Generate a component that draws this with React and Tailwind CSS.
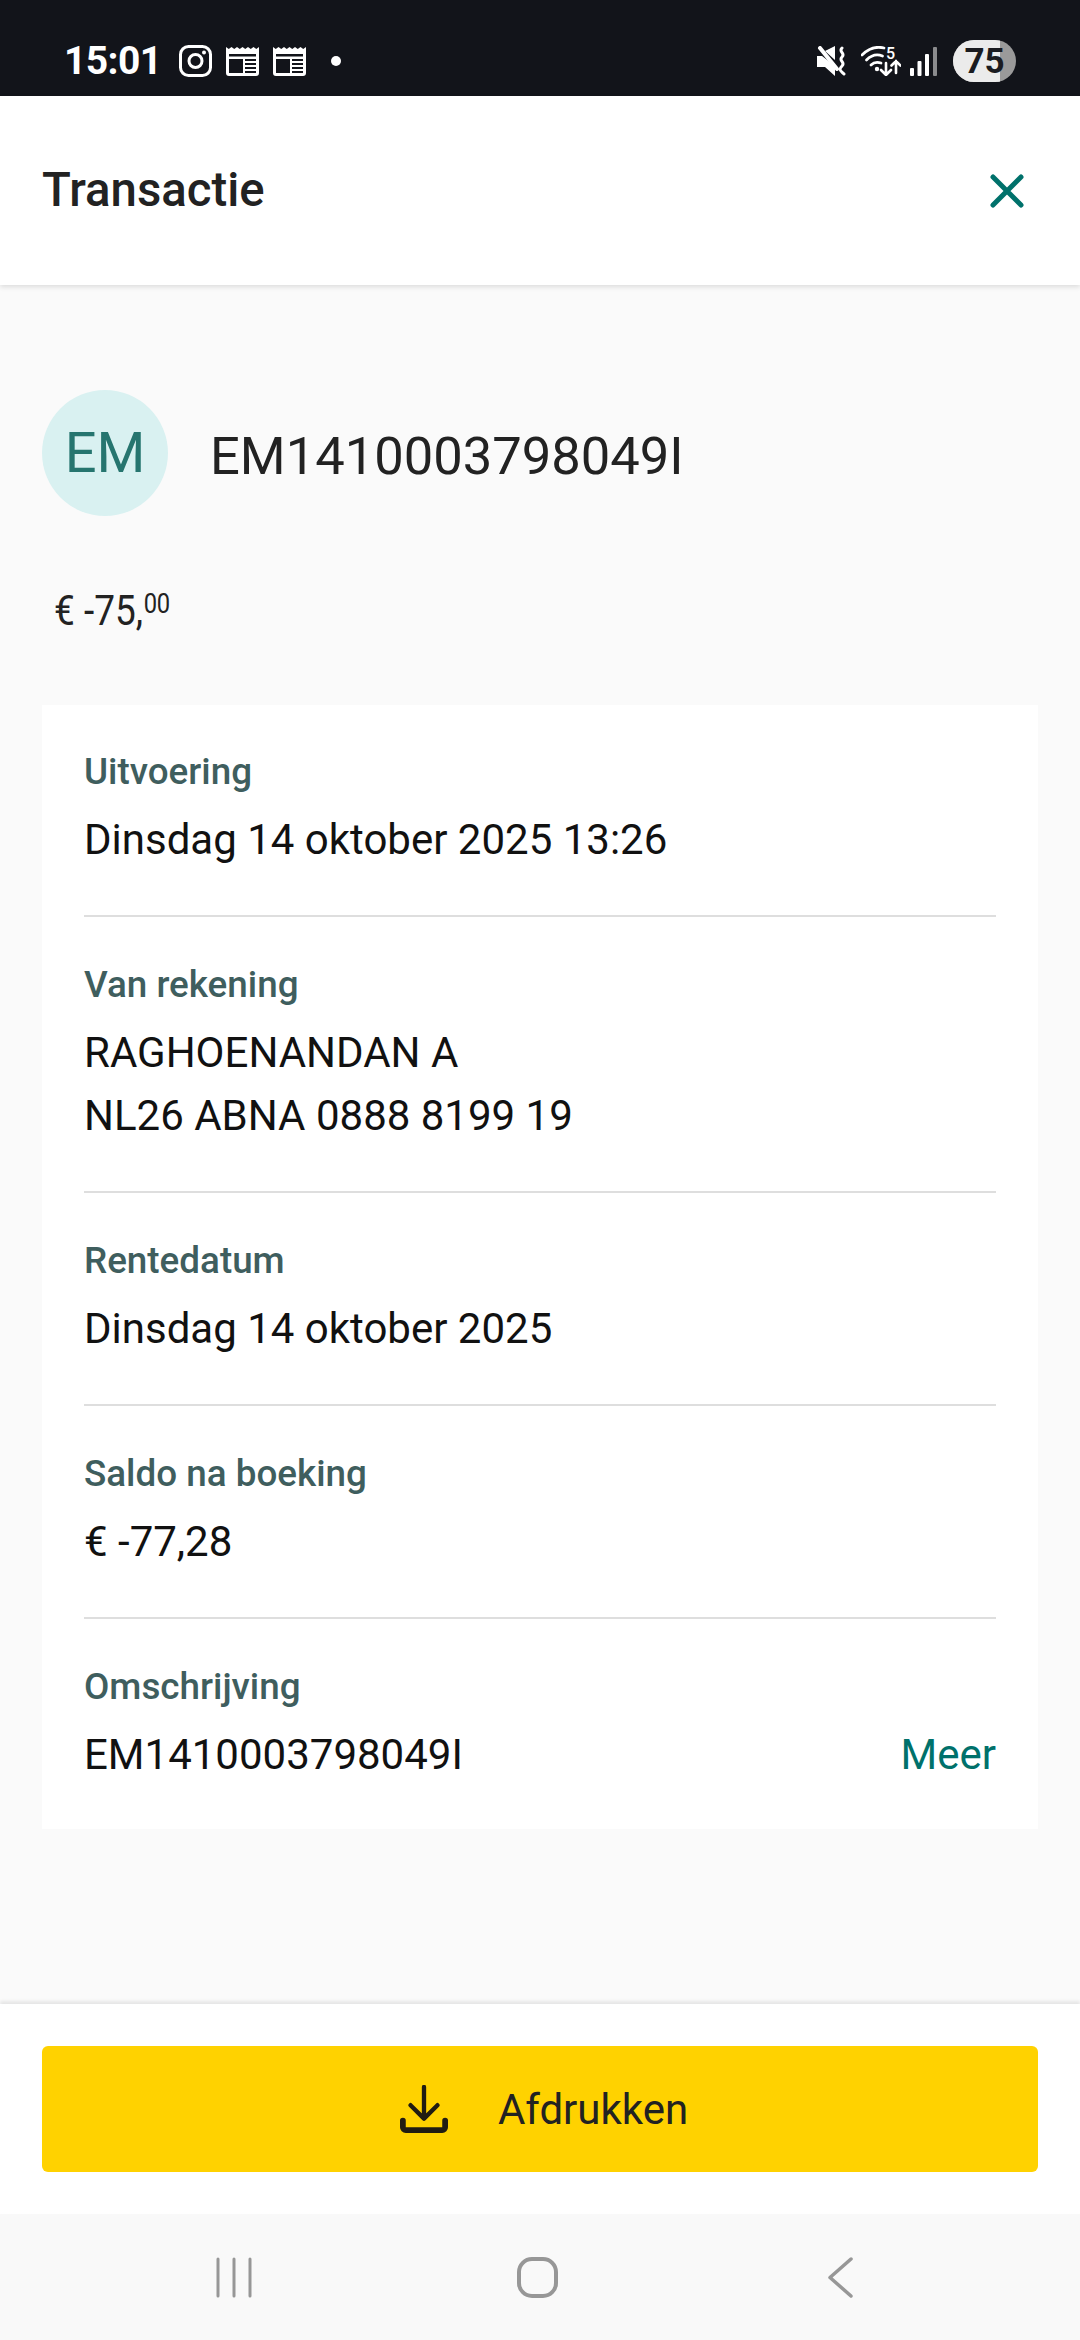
const font = { fontFamily: "Roboto, sans-serif" };

function Insta() {
  return (
    <svg width="33" height="32" viewBox="0 0 33 32" fill="none" stroke="#fff" strokeWidth="3">
      <rect x="1.5" y="1.5" width="30" height="29" rx="8" />
      <circle cx="16.5" cy="16" r="6.5" />
      <circle cx="25" cy="7.5" r="2" fill="#fff" stroke="none" />
    </svg>
  );
}

function Paper() {
  return (
    <svg width="33" height="30" viewBox="0 0 33 30">
      <path d="M0 1l2.75 2 2.75-2 2.75 2 2.75-2 2.75 2 2.75-2 2.75 2 2.75-2 2.75 2 2.75-2 2.75 2 2.75-2V27a3 3 0 0 1-3 3H3a3 3 0 0 1-3-3z" fill="#fff" />
      <rect x="3" y="8" width="27" height="2.5" fill="#12141a" />
      <rect x="3" y="13" width="14" height="14" fill="#12141a" />
      <rect x="19" y="13" width="11" height="2" fill="#12141a" />
      <rect x="19" y="17" width="11" height="2" fill="#12141a" />
      <rect x="19" y="21" width="11" height="2" fill="#12141a" />
      <rect x="19" y="25" width="11" height="2" fill="#12141a" />
    </svg>
  );
}

function Mute() {
  return (
    <svg width="29" height="30" viewBox="0 0 29 30" fill="none">
      <path d="M0 10h5L18 20v10L8 21H0z M8 5l10-5v14z" fill="#fff" />
      <path d="M3 2l17 21" stroke="#fff" strokeWidth="4" strokeLinecap="round" />
      <path d="M25 2c-4 4 4 5 0 9s4 5 0 9-1 5 2 8" stroke="#fff" strokeWidth="3" strokeLinecap="round" />
    </svg>
  );
}

function Wifi() {
  return (
    <svg width="40" height="30" viewBox="0 0 40 30" fill="none" stroke="#fff" strokeLinecap="round">
      <path d="M1 9C7 3 15 0 23 2" strokeWidth="2.8" />
      <path d="M5.5 14c5-5 11-6 16-4" strokeWidth="2.8" />
      <path d="M10 19c3-3 7-3 10-2" strokeWidth="2.8" />
      <circle cx="16" cy="23" r="2.2" fill="#fff" stroke="none" />
      <path d="M25 17v12m-5-5l5 5 5-5" strokeWidth="2.6" />
      <path d="M35 27V15m-4.5 4.5L35 15l4.500 4.500" strokeWidth="2.6" />
    </svg>
  );
}

function Signal() {
  return (
    <svg width="27" height="29" viewBox="0 0 27 29">
      <rect x="0" y="21" width="4" height="8" rx="1" fill="#fff" />
      <rect x="7.500" y="14" width="4" height="15" rx="1" fill="#fff" />
      <rect x="15" y="7" width="4" height="22" rx="1" fill="#fff" />
      <rect x="23" y="0" width="4" height="29" rx="1" fill="#8a8b8d" />
    </svg>
  );
}

function Battery() {
  return (
    <div className="relative w-[63px] h-[42px] rounded-full overflow-hidden bg-[#9a9a9a] flex items-center justify-center">
      <div className="absolute left-0 top-0 bottom-0 w-[47px] bg-[#ebebeb]" />
      <span className="relative text-[#1a1b20] text-[35px] font-bold leading-none">75</span>
    </div>
  );
}

function Row({ label, children, first, last, right }) {
  const pad = first ? "pt-[47px] pb-[44px]" : last ? "pt-[48px] pb-[43px]" : "pt-[48px] pb-[44px]";
  return (
    <div className={last ? pad : pad + " border-b-2 border-[#dedede]"}>
      <div className="text-[36.800px] leading-[40px] font-medium text-[#3f5e5e]">{label}</div>
      <div className="mt-[16px] flex justify-between items-center">
        <div className="text-[42px] leading-[63px] text-[#111]">{children}</div>
        {right}
      </div>
    </div>
  );
}

export default function App() {
  return (
    <div style={font} className="w-[1080px] h-[2340px] bg-[#fafafa] flex flex-col overflow-hidden">
      <div className="h-[96px] bg-[#12141a] flex items-center justify-between pl-[64px] pr-[64px] pt-[26px] shrink-0">
        <div className="flex items-center">
          <span className="text-white text-[39px] font-bold leading-none w-[115px] tracking-[-0.6px]">15:01</span>
          <div className="flex items-center gap-[14px]">
            <Insta />
            <Paper />
            <Paper />
          </div>
          <div className="w-[10px] h-[10px] rounded-full bg-white ml-[25px]" />
        </div>
        <div className="flex items-center">
          <Mute />
          <div className="relative ml-[15px]">
            <Wifi />
            <span className="absolute left-[25px] top-[0px] text-white text-[16px] font-medium leading-none">5</span>
          </div>
          <div className="ml-[9px]"><Signal /></div>
          <div className="ml-[16px]"><Battery /></div>
        </div>
      </div>

      <div className="h-[189px] bg-white flex items-center justify-between pl-[42px] pr-[56px] shadow-[0_2px_5px_rgba(0,0,0,0.12)] relative shrink-0">
        <div className="text-[47.300px] font-medium text-[#222]">Transactie</div>
        <svg width="34" height="34" viewBox="0 0 34 34" fill="none" stroke="#00716b" strokeWidth="5" strokeLinecap="round">
          <path d="M3 3l28 28M31 3L3 31" />
        </svg>
      </div>

      <div className="flex-1 px-[42px] pt-[105px]">
        <div className="flex items-center">
          <div className="w-[126px] h-[126px] rounded-full bg-[#d9f1f1] flex items-center justify-center text-[56px] text-[#26756f] shrink-0">EM</div>
          <div className="ml-[42px] mt-[6px] text-[52.500px] text-[#222]">EM1410003798049I</div>
        </div>
        <div className="mt-[70px] ml-[12px] h-[50px] flex items-start origin-left scale-x-[0.88] text-[#222]">
          <span className="text-[42px] leading-[50px]">€ -75,</span>
          <span className="text-[27px] leading-[36px] tracking-[-0.5px] ml-[1px]">00</span>
        </div>
        <div className="mt-[69px] bg-white px-[42px]">
          <Row first label="Uitvoering">Dinsdag 14 oktober 2025 13:26</Row>
          <Row label="Van rekening">RAGHOENANDAN A<br />NL26 ABNA 0888 8199 19</Row>
          <Row label="Rentedatum">Dinsdag 14 oktober 2025</Row>
          <Row label="Saldo na boeking">€ -77,28</Row>
          <Row label="Omschrijving" last right={<span className="text-[42px] text-[#00716b]">Meer</span>}>EM1410003798049I</Row>
        </div>
      </div>

      <div className="h-[210px] bg-white px-[42px] pt-[42px] shadow-[0_-3px_3px_rgba(0,0,0,0.08)] relative shrink-0">
        <div className="h-[126px] rounded-[6px] bg-[#ffd200] flex items-center justify-center gap-[50px] pl-[8px]">
          <svg width="48" height="48" viewBox="0 0 50 50" fill="none" stroke="#211c12" strokeLinecap="round" strokeLinejoin="round">
            <path d="M25 2v32M11 21l14 14 14-14" strokeWidth="4.500" />
            <path d="M3 37v7a3 3 0 0 0 3 3h38a3 3 0 0 0 3-3v-7" strokeWidth="6" />
          </svg>
          <span className="text-[42px] text-[#222]">Afdrukken</span>
        </div>
      </div>

      <div className="h-[126px] bg-[#f9f9f9] shrink-0 pt-[43px] pl-[216px] flex items-start">
        <svg width="36" height="41" viewBox="0 0 36 41" stroke="#979797" strokeWidth="3" strokeLinecap="round"><path d="M2 2v37M18 2v37M34 2v37" /></svg>
        <svg className="ml-[265px]" width="41" height="41" viewBox="0 0 41 41" fill="none" stroke="#979797" strokeWidth="4"><rect x="2" y="2" width="37" height="37" rx="13" /></svg>
        <svg className="ml-[269px]" width="26" height="41" viewBox="0 0 26 41" fill="none" stroke="#979797" strokeWidth="3.500" strokeLinecap="round" strokeLinejoin="round"><path d="M24 2L3 20.500 24 39" /></svg>
      </div>
    </div>
  );
}
